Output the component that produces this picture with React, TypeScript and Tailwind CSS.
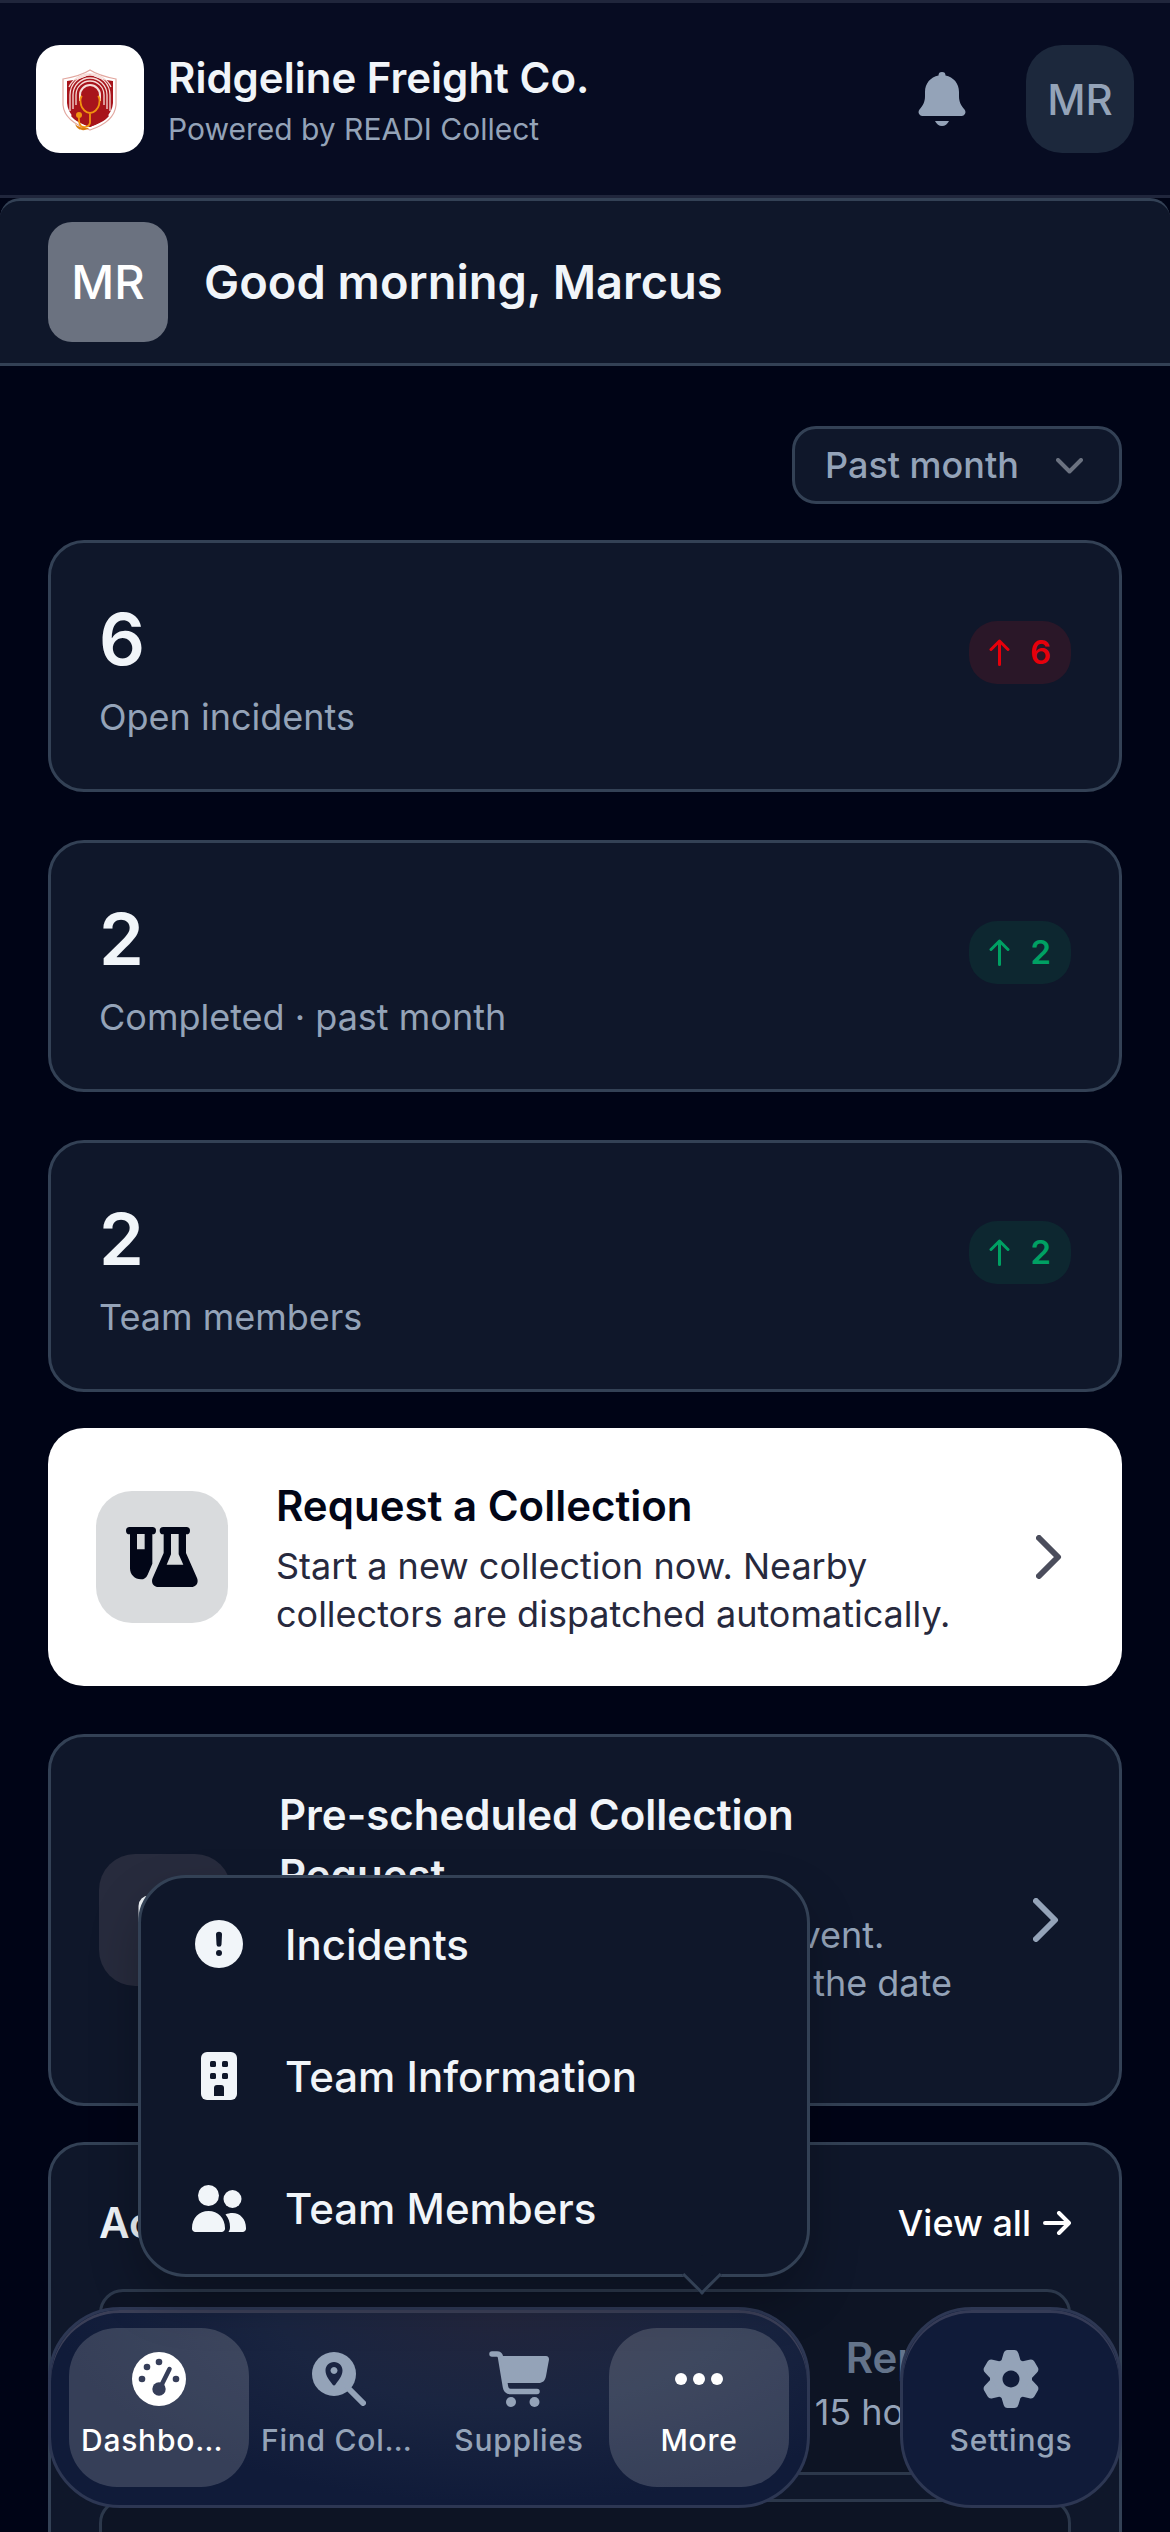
"use client";

import React from "react";

type IconProps = { className?: string };

const Logo = () => (
  <svg viewBox="0 0 108 108" className="size-27" aria-label="Logo">
    <path d="M54 25 C60 29 70 32 80 34 V60 C79 72 69 80 54 85 C39 80 28 72 27 60 V34 C38 32 48 29 54 25Z" fill="#fff" stroke="#e2a79f" strokeWidth="1.2" />
    <path d="M54 29 C60 33 68 35 77 36 V58 C76 70 67 77 54 82 C41 77 32 70 31 58 V36 C40 35 48 33 54 29Z" fill="#a8141b" />
    <g fill="none" stroke="#f6dcd8" strokeWidth="1.3">
      <path d="M44 56 V50 a10 10 0 0 1 20 0 V56" strokeWidth="2" />
      <path d="M40 60 V50 a14 14 0 0 1 28 0 V60" />
      <path d="M37 64 V50 a17 17 0 0 1 34 0 V64" />
      <path d="M34 66 V50 a20 20 0 0 1 40 0 V66" />
      <path d="M33 42 a23 22 0 0 1 42 0" />
    </g>
    <path d="M54 42 c5 0 8 4 8 9 c0 5-2 9-4 11 v2 c7 2 13 4 15 7 c-4 5-11 8-19 11 c-8-3-15-6-19-11 c2-3 8-5 15-7 v-2 c-2-2-4-6-4-11 c0-5 3-9 8-9Z" fill="#a8141b" />
    <path d="M46 51 c-3 3-1 7-1 9 c1 4 5 8 9 8 c4 0 8-4 9-8 c0-2 2-6-1-9 M54 68 V78 c-1 4-6 5-9 3 c-3-3-2-7-2-11" fill="none" stroke="#f0930f" strokeWidth="1.8" />
    <circle cx="43" cy="70" r="3" fill="#f0930f" />
    <path d="M39 79 c3 3 8 4 14 4 c-3 3-11 4-14-4Z" fill="#d97c10" />
  </svg>
);

const BellIcon = ({ className }: IconProps) => (
  <svg viewBox="0 0 48 54" className={className} fill="currentColor">
    <path d="M24 0 a3.5 3.5 0 0 1 3.5 3.6 C35.500 5.200 41 11.500 41 20 V24 C41 30 43 33.500 46.500 37.500 A4 4 0 0 1 44 44 H4 A4 4 0 0 1 1.500 37.500 C5 33.500 7 30 7 24 V20 C7 11.500 12.500 5.200 20.500 3.600 A3.5 3.5 0 0 1 24 0Z" />
    <path d="M17 49 H31 C29.500 52 27 54 24 54 C21 54 18.500 52 17 49Z" />
  </svg>
);

const ArrowUpIcon = () => (
  <svg viewBox="0 0 21 27" className="h-[27px] w-[21px]" fill="none" stroke="currentColor" strokeWidth="3" strokeLinecap="round" strokeLinejoin="round">
    <path d="M10.500 25.500 V2 M2 10.500 L10.500 2 L19 10.500" />
  </svg>
);

const ArrowRightIcon = () => (
  <svg viewBox="0 0 28 24" className="h-6 w-7" fill="none" stroke="currentColor" strokeWidth="4" strokeLinecap="round" strokeLinejoin="round">
    <path d="M2 12 H26 M16 2 L26 12 L16 22" />
  </svg>
);

const ChevronDownIcon = ({ className }: IconProps) => (
  <svg viewBox="0 0 27 16" className={className} fill="none" stroke="currentColor" strokeWidth="4" strokeLinecap="round" strokeLinejoin="round">
    <path d="M2 2 L13.500 13.500 L25 2" />
  </svg>
);

const ChevronRightIcon = ({ className }: IconProps) => (
  <svg viewBox="0 0 26 44" className={className} fill="none" stroke="currentColor" strokeWidth="6" strokeLinecap="round" strokeLinejoin="round">
    <path d="M3 3 L22 22 L3 41" />
  </svg>
);

const FlaskIcon = () => (
  <svg viewBox="0 0 216 180" className="h-15 w-18" fill="currentColor">
    <path fillRule="evenodd" d="M11 0 H79 a11 11 0 0 1 0 22 V110 L65 143 C60 153 54 157 45 157 C26 157 12 143 12 124 V22 H11 A11 11 0 0 1 11 0Z M33 21 V67 H56 V21Z" />
    <path fillRule="evenodd" d="M112 0 H181 a11 11 0 0 1 0 22 H180 V78 L213 153 C219 167 210 180 196 180 H97 C83 180 74 167 80 153 L113 78 V22 H112 A11 11 0 0 1 112 0Z M135 21 V82 L122 113 H172 L158 82 V21Z" />
  </svg>
);

const CalendarIcon = () => (
  <svg viewBox="0 0 54 60" className="h-15 w-[54px]" fill="none" stroke="currentColor" strokeWidth="5">
    <rect x="3" y="8" width="48" height="49" rx="8" />
    <path d="M3 24 H51 M16 1 V14 M38 1 V14" />
  </svg>
);

const AlertIcon = () => (
  <svg viewBox="0 0 48 48" className="size-12">
    <circle cx="24" cy="24" r="24" fill="currentColor" />
    <path d="M21 14.500 a3 2.800 0 0 1 6 0 L26.500 24.500 a2.500 2.300 0 0 1 -5 0Z" fill="#0f172a" />
    <circle cx="24" cy="33" r="3" fill="#0f172a" />
  </svg>
);

const BuildingIcon = () => (
  <svg viewBox="0 0 36 48" className="h-12 w-9">
    <rect width="36" height="48" rx="6" fill="currentColor" />
    <g fill="#0f172a">
      <rect x="9" y="9" width="6" height="6" rx="1.500" />
      <rect x="21" y="9" width="6" height="6" rx="1.500" />
      <rect x="9" y="21" width="6" height="6" rx="1.500" />
      <rect x="21" y="21" width="6" height="6" rx="1.500" />
      <path d="M13 44 V36 a3 3 0 0 1 3-3 H20 a3 3 0 0 1 3 3 V44Z" />
    </g>
  </svg>
);

const GroupIcon = () => (
  <svg viewBox="0 0 54 47" className="h-[47px] w-[54px]" fill="currentColor">
    <circle cx="16.500" cy="10.500" r="10.500" />
    <circle cx="40.500" cy="14" r="9" />
    <path d="M0 43 C0 33 7 26 16.500 26 C26 26 33 33 33 43 A3.500 3.500 0 0 1 29.500 47 H3.500 A3.500 3.500 0 0 1 0 43Z" />
    <path d="M33.500 29.500 C35.500 28.500 38 28 40.500 28 C48 28 54 34 54 43 A3.500 3.500 0 0 1 50.500 47 H36.500 C37.500 45.500 38 44 38 42 C38 37 36.500 33 33.500 29.500Z" />
  </svg>
);

const GaugeIcon = () => (
  <svg viewBox="0 0 54 54" className="size-[54px]">
    <circle cx="27" cy="27" r="27" fill="currentColor" />
    <g fill="#363e59">
      <circle cx="10" cy="27" r="3.300" />
      <circle cx="15" cy="15" r="3.300" />
      <circle cx="27" cy="10" r="3.300" />
      <circle cx="44" cy="27" r="3.300" />
      <circle cx="27" cy="37" r="6.700" />
    </g>
    <path d="M28 36 L37.500 17" stroke="#363e59" strokeWidth="4.500" strokeLinecap="round" />
  </svg>
);

const FindIcon = () => (
  <svg viewBox="0 0 54 54" className="size-[54px]">
    <circle cx="22" cy="22" r="22" fill="currentColor" />
    <path d="M36 36 L51 51" stroke="currentColor" strokeWidth="6" strokeLinecap="round" />
    <path fillRule="evenodd" fill="#1a2442" d="M22 10 C27 10 30.500 13.700 30.500 18.500 C30.500 24 26 29 23.500 32.500 Q22 34.500 20.500 32.500 C18 29 13.500 24 13.500 18.500 C13.500 13.700 17 10 22 10Z M22 15 a3.500 3.500 0 1 0 0.010 0Z" />
  </svg>
);

const CartIcon = () => (
  <svg viewBox="0 0 60 56" className="h-14 w-[60px]" fill="currentColor">
    <path d="M3 3 H8 C10 3 11 4 11.500 6 L16.500 36 C17 39 18.500 40.500 21.500 40.500 H48" fill="none" stroke="currentColor" strokeWidth="5.500" strokeLinecap="round" />
    <path d="M11 5 H57 C59 5 60 6.500 60 8.500 L57 25 C56 30 53.500 32 49.500 32 H16Z" />
    <circle cx="22" cy="51" r="5" />
    <circle cx="45.500" cy="51" r="5" />
  </svg>
);

const DotsIcon = () => (
  <svg viewBox="0 0 54 54" className="size-[54px]" fill="currentColor">
    <circle cx="9" cy="27" r="6" />
    <circle cx="27" cy="27" r="6" />
    <circle cx="45" cy="27" r="6" />
  </svg>
);

const GearIcon = () => (
  <svg viewBox="-29 -29 58 58" className="size-[58px]" fill="currentColor">
    <path fillRule="evenodd" d="M0 -21 a21 21 0 1 0 0.010 0Z M0 -8.500 a8.500 8.500 0 1 1 -0.010 0Z" />
    {[0, 60, 120, 180, 240, 300].map((deg) => (
      <path key={deg} transform={`rotate(${deg})`} d="M-10 -17 L-7.500 -25.500 Q-6.500 -29 -3.500 -29 H3.500 Q6.500 -29 7.500 -25.500 L10 -17Z" />
    ))}
  </svg>
);

const stats = [
  { value: 6, label: "Open incidents", change: 6, tone: "bg-[#2a1728] text-[#e7000b]" },
  { value: 2, label: "Completed · past month", change: 2, tone: "bg-[#0d2730] text-[#00a063]" },
  { value: 2, label: "Team members", change: 2, tone: "bg-[#0d2730] text-[#00a063]" },
];

const menuItems = [
  { href: "#incidents", label: "Incidents", icon: <AlertIcon /> },
  { href: "#team-info", label: "Team Information", icon: <BuildingIcon /> },
  { href: "#team-members", label: "Team Members", icon: <GroupIcon /> },
];

const navItems = [
  { label: "Dashboard", icon: <GaugeIcon />, isActive: true },
  { label: "Find Collectors", icon: <FindIcon />, isActive: false },
  { label: "Supplies", icon: <CartIcon />, isActive: false },
  { label: "More", icon: <DotsIcon />, isActive: true },
];

function NavButton({ label, icon, isActive }: { label: string; icon: React.ReactNode; isActive: boolean }) {
  return (
    <button
      className={`flex h-[159px] w-[180px] flex-col items-center gap-4 rounded-[48px] px-3 pt-6 text-[30px] leading-9 font-medium tracking-wide ${
        isActive ? "bg-white/16 text-white" : "text-[#94a3b8]"
      }`}
    >
      <span className="flex h-[54px] items-center">{icon}</span>
      <span className="max-w-full truncate">{label}</span>
    </button>
  );
}

export default function App() {
  return (
    <div className="relative flex h-dvh flex-col overflow-hidden bg-[#000416] font-['Inter',sans-serif] text-[#f1f5f9]">
      {/* Header */}
      <header className="flex h-[198px] shrink-0 items-center border-y-3 border-[#20263c] bg-[#070c22] px-9">
        <div className="size-27 shrink-0 rounded-3xl bg-white">
          <Logo />
        </div>
        <div className="ml-6 flex-1 pt-1.5">
          <h1 className="text-[42px] leading-[54px] font-semibold">Ridgeline Freight Co.</h1>
          <p className="text-[30px] leading-12 text-[#94a3b8]">Powered by READI Collect</p>
        </div>
        <div className="flex items-center gap-9">
          <button aria-label="Notifications" className="flex size-24 items-center justify-center text-[#94a3b8]">
            <BellIcon className="h-[54px] w-12" />
          </button>
          <button className="size-27 rounded-[36px] bg-[#1c283c] text-[42px] font-medium text-[#94a3b8]">MR</button>
        </div>
      </header>

      <main className="min-h-0 flex-1 overflow-y-auto [scrollbar-width:none]">
        {/* Greeting */}
        <section className="flex items-center gap-9 rounded-t-[20px] border-y-3 border-[#334155] bg-[#0f172a] px-12 py-[21px]">
          <div className="flex size-30 items-center justify-center rounded-3xl bg-[#6b7280] text-[47px] font-medium text-white">MR</div>
          <h2 className="text-[47px] leading-15 font-semibold">Good morning, Marcus</h2>
        </section>

        <div className="px-12 pt-15">
          <div className="flex justify-end">
            <div className="relative">
              <select
                aria-label="Period"
                className="h-[78px] w-[330px] appearance-none rounded-3xl border-3 border-[#334155] bg-[#0f172a] px-[30px] text-[36px] font-medium text-[#94a3b8]"
              >
                <option>Past month</option>
                <option>Past week</option>
              </select>
              <ChevronDownIcon className="pointer-events-none absolute top-8 right-[39px] h-4 w-[27px] text-[#6b7280]" />
            </div>
          </div>

          {/* Stats */}
          <div className="mt-9 flex flex-col gap-12">
            {stats.map(({ value, label, change, tone }) => (
              <div key={label} className="flex items-start justify-between rounded-[36px] border-3 border-[#334155] bg-[#0f172a] p-12">
                <div>
                  <p className="text-[72px] leading-24 font-semibold">{value}</p>
                  <p className="mt-1.5 text-[36px] leading-12 text-[#94a3b8]">{label}</p>
                </div>
                <span className={`mt-[30px] flex h-[63px] items-center gap-5 rounded-[28px] px-5 text-[33px] font-semibold ${tone}`}>
                  <ArrowUpIcon />
                  {change}
                </span>
              </div>
            ))}
          </div>

          {/* Actions */}
          <a href="#request" className="mt-9 flex items-center gap-12 rounded-[36px] bg-white p-12 text-[#020617]">
            <span className="flex size-33 shrink-0 items-center justify-center rounded-[36px] bg-[#d9dbdd]">
              <FlaskIcon />
            </span>
            <span className="flex-1">
              <span className="block text-[42px] leading-15 font-semibold">Request a Collection</span>
              <span className="mt-1.5 block text-[36px] leading-12 text-[#27293d]">
                Start a new collection now. Nearby collectors are dispatched automatically.
              </span>
            </span>
            <ChevronRightIcon className="mr-3 h-11 w-[26px] text-[#4b4d5c]" />
          </a>

          <a href="#schedule" className="mt-12 flex items-center gap-12 rounded-[36px] border-3 border-[#334155] bg-[#0f172a] p-12">
            <span className="flex size-33 shrink-0 items-center justify-center rounded-[36px] bg-[#272b3d]">
              <CalendarIcon />
            </span>
            <span className="flex-1">
              <span className="block max-w-[600px] text-[42px] leading-15 font-semibold">Pre-scheduled Collection Request</span>
              <span className="mt-1.5 block max-w-[696px] text-[36px] leading-12 text-[#94a3b8]">
                Book a collection for a future event. Select the location and choose the date and time.
              </span>
            </span>
            <ChevronRightIcon className="mr-3 h-11 w-[26px] text-[#94a3b8]" />
          </a>

          {/* Activity */}
          <section className="mt-9 rounded-[36px] border-3 border-[#334155] bg-[#0f172a] p-12">
            <div className="flex items-center justify-between">
              <h3 className="text-[42px] leading-15 font-semibold">Active Incidents</h3>
              <a href="#all" className="flex items-center gap-3 text-[36px] leading-12 font-medium text-white">
                View all
                <ArrowRightIcon />
              </a>
            </div>
            <div className="mt-9 flex flex-col gap-6">
              {[1, 2].map((id) => (
                <div key={id} className="rounded-3xl border-3 border-[#2c384b] bg-[#0d1424] p-9 text-right">
                  <p className="text-[42px] leading-15 font-semibold text-[#64748b]">Reported</p>
                  <p className="text-[36px] leading-12 text-[#94a3b8]">15 hours ago</p>
                </div>
              ))}
            </div>
          </section>
        </div>
      </main>

      {/* Bottom nav */}
      <div className="absolute inset-x-12 bottom-6 flex items-end justify-between">
        <nav className="relative flex rounded-[72px] border-3 border-[#2d3753] bg-[#101b39] bg-[radial-gradient(ellipse_at_60%_0%,#23263d_0%,#1a2541_35%,#101b39_70%)] p-[18px] shadow-[inset_0_3px_0_#3b3f57]">
          {navItems.map((item) => (
            <NavButton key={item.label} {...item} />
          ))}

          {/* More menu */}
          <div className="absolute right-[-3px] bottom-[228px] w-[672px] rounded-[48px] border-3 border-[#334155] bg-[#0f172a] shadow-[0_24px_48px_rgba(0,0,0,0.25)]">
            {menuItems.map(({ href, label, icon }) => (
              <a key={href} href={href} className="flex h-33 items-center gap-9 px-12 text-[42px] font-medium">
                <span className="flex w-15 justify-center">{icon}</span>
                {label}
              </a>
            ))}
            <span className="absolute right-[91px] bottom-[-15px] size-7 rotate-45 border-r-3 border-b-3 border-[#334155] bg-[#0f172a]" />
          </div>
        </nav>
        <nav className="flex rounded-[72px] border-3 border-[#2d3753] bg-[#101b39] p-[18px] shadow-[inset_0_3px_0_#353b56]">
          <NavButton label="Settings" icon={<GearIcon />} isActive={false} />
        </nav>
      </div>
    </div>
  );
}
